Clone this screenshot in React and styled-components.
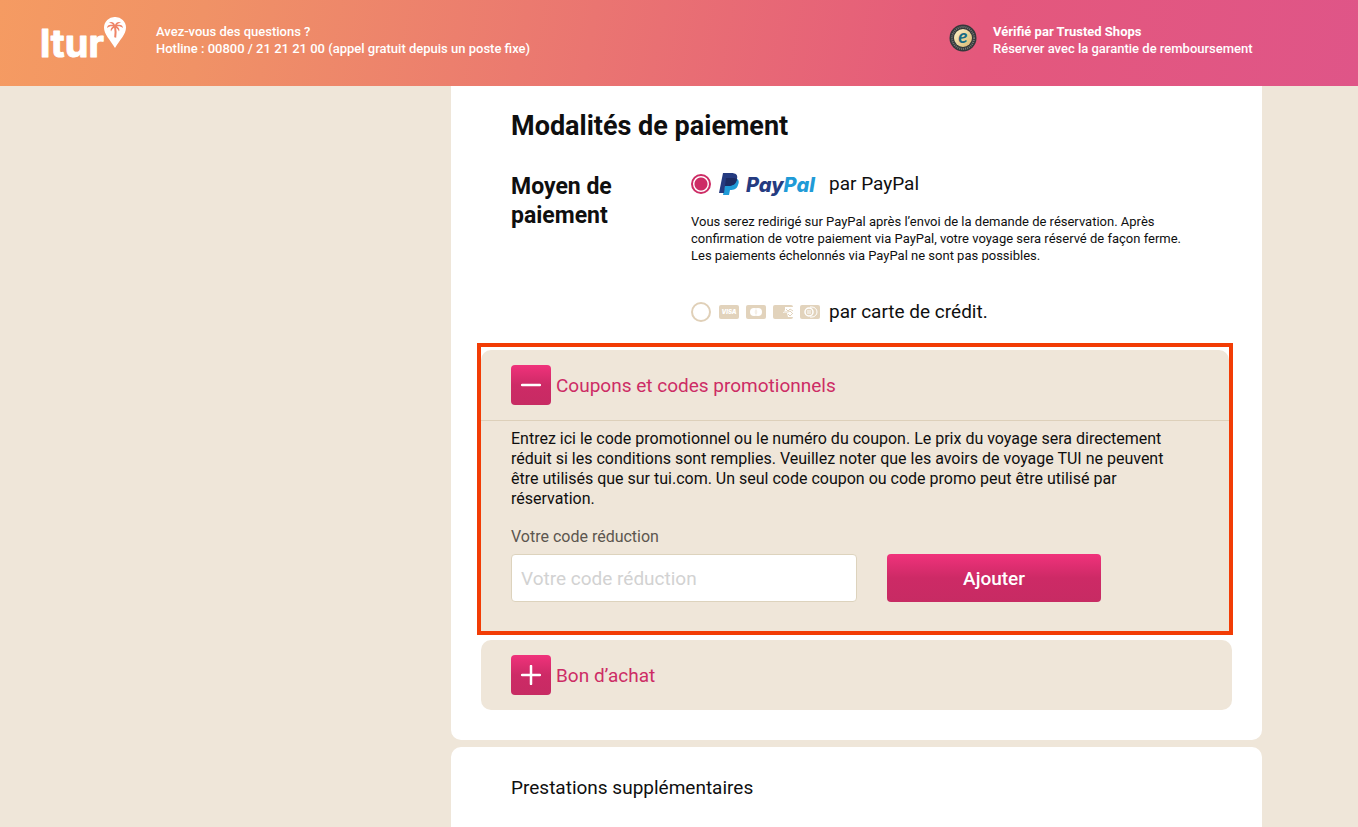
import React, { useState } from 'react'
import styled, { createGlobalStyle } from 'styled-components';

const GlobalStyle = createGlobalStyle`
  * {
    box-sizing: border-box;
  }
  body {
    margin: 0;
    background: #efe6d9;
    color: #0f0f0f;
    font-family: Roboto, "Liberation Sans", sans-serif;
    font-size: 16px;
    line-height: 20px;
  }
  h1, h2, h3, p {
    margin: 0;
  }
  button, input {
    font-family: inherit;
  }
`;

const Header = styled.header`
  display: flex;
  align-items: flex-start;
  height: 86px;
  padding: 16px 96px 0 40px;
  color: #fff;
  background: linear-gradient(100deg, #f59b62 0%, #f09266 15%, #e4587c 72%, #df5588 100%);
`;

const LogoLink = styled.a`
  display: block;
  width: 88px;
  height: 56px;
  margin-right: 28px;
  color: inherit;
`;

const HeaderText = styled.p`
  padding-top: 7px;
  font-size: 13px;
  font-weight: 500;
  line-height: 17px;

  strong {
    font-weight: 700;
  }
`;

const Trust = styled.div`
  display: grid;
  grid-template-columns: 28px 269px;
  align-items: start;
  gap: 16px;
  margin-left: auto;

  svg {
    margin-top: 8px;
  }
`;

const Layout = styled.div`
  display: grid;
  grid-template-columns: 355px 1fr;
  padding: 0 96px;
`;

const Content = styled.main`
  grid-column: 2;
  display: flex;
  flex-direction: column;
  gap: 7px;
`;

const Card = styled.section`
  padding: ${({ $first }) => ($first ? '22px 30px 30px' : '27px 30px 60px')};
  background: #fff;
  border-radius: ${({ $first }) => ($first ? '0 0 10px 10px' : '10px')};
`;

const Title = styled.h1`
  padding: 0 30px;
  font-size: 27px;
  font-weight: 700;
  line-height: 36px;
`;

const Payment = styled.div`
  display: grid;
  grid-template-columns: 150px 1fr;
  gap: 30px;
  padding: 26px 30px 17px;
`;

const Subtitle = styled.h2`
  font-size: 23px;
  font-weight: 700;
  line-height: 29px;
  padding-top: 2px;
`;

const Option = styled.label`
  display: flex;
  align-items: center;
  height: 28px;
  font-size: 19px;
`;

const Radio = styled.input`
  appearance: none;
  flex: none;
  width: 20px;
  height: 20px;
  margin: 0 8px 0 0;
  border: 2px solid #e0d0b8;
  border-radius: 50%;
  background: #fff;

  &:checked {
    border-color: #cd2c65;
    background: radial-gradient(circle, #cd2c65 6px, #fff 7px);
  }
`;

const Brands = styled.span`
  display: flex;
  gap: 7px;
  width: 110px;
`;

const Hint = styled.p`
  padding: 15px 0 34px;
  font-size: 13px;
  line-height: 17px;
`;

const Highlight = styled.div`
  margin: 0 -1px 5px -4px;
  padding-top: 3px;
  border: 4px solid #f23c05;
`;

const Panel = styled.section`
  background: #efe6d9;
  border-radius: ${({ $open }) => ($open ? '10px 10px 0 0' : '10px')};
`;

const PanelHead = styled.h3`
  height: 70px;
  padding: 15px 30px;
`;

const Toggle = styled.button`
  display: flex;
  align-items: center;
  gap: 5px;
  padding: 0;
  border: 0;
  background: none;
  color: #cd2c65;
  font-size: 19px;
  font-weight: 400;
  cursor: pointer;
`;

const ToggleIcon = styled.span`
  display: grid;
  place-items: center;
  width: 40px;
  height: 40px;
  border-radius: 4px;
  background: linear-gradient(#f0327b, #cd2a66 50%, #c72b63);
`;

const PanelBody = styled.div`
  padding: 8px 30px 29px;
  border-top: 1px solid #ddd0ba;
`;

const PanelText = styled.p`
  padding-right: 30px;
`;

const Label = styled.label`
  display: block;
  padding: 18px 0 7px;
  color: #5c564f;
`;

const CodeForm = styled.form`
  display: grid;
  grid-template-columns: 346px 214px;
  gap: 30px;
`;

const CodeInput = styled.input`
  width: 100%;
  height: 48px;
  padding: 0 9px;
  border: 1px solid #ddd3bd;
  border-radius: 4px;
  background: #fff;
  font-size: 19px;

  &::placeholder {
    color: #d2d2d2;
    opacity: 1;
  }
`;

const Submit = styled.button`
  height: 48px;
  border: 0;
  border-radius: 4px;
  color: #fff;
  font-size: 19px;
  font-weight: 500;
  background: linear-gradient(#f0327b, #cd2a66 50%, #c72b63);
  cursor: pointer;
`;

const Extras = styled.h2`
  padding: 0 30px;
  font-size: 19px;
  font-weight: 400;
  line-height: 28px;
`;

const LturLogo = () => (
  <svg width="88" height="56" viewBox="0 0 88 56" aria-label="ltur">
    <text x="0" y="41" fontFamily="Inter, sans-serif" fontWeight="700" fontSize="38" fill="#fff" stroke="#fff" strokeWidth="1" strokeLinejoin="round">ltur</text>
    <path d="M75 1a10.500 10.500 0 0 1 11 10.500c0 7-6 12-11 20.500c-5-8.500-11-13.500-11-20.500A10.500 10.500 0 0 1 75 1z" fill="#fff" />
    <path d="M75 10.500c.8 4 .8 7 .2 11" fill="none" stroke="#ee8467" strokeWidth="2" />
    <path d="M75 9c1-3 4-4 6-2c-2-.4-3 .3-4 2c3-1 6 0 6 3c-2-1.500-4-2-6-1.500c2 1 3 3 2 5c-1-2-2-3.500-4-4c-2 .5-3 2-4 4c-1-2 0-4 2-5c-2-.5-4 0-6 1.500c0-3 3-4 6-3c-1-1.700-2-2.400-4-2c2-2 5-1 6 2z" fill="#ee8467" />
  </svg>
);

const TrustBadge = () => (
  <svg width="28" height="28" viewBox="0 0 28 28" aria-hidden="true">
    <defs>
      <linearGradient id="gold" x1="0" y1="0" x2="1" y2="1">
        <stop offset="0" stopColor="#fff3c9" />
        <stop offset="1" stopColor="#d5b66f" />
      </linearGradient>
    </defs>
    <circle cx="14" cy="14" r="13.500" fill="#34383a" />
    <circle cx="14" cy="14" r="11" fill="none" stroke="#777a76" strokeWidth="2" strokeDasharray="1 1" />
    <circle cx="14" cy="14" r="9" fill="url(#gold)" />
    <text x="14" y="19" textAnchor="middle" fontFamily="Lato, sans-serif" fontSize="19" fontStyle="italic" fontWeight="700" fill="#176b85">e</text>
  </svg>
);

const PayPalLogo = () => (
  <svg width="98" height="24" viewBox="0 0 98 24" aria-label="PayPal">
    <path d="M7 6h8c4 0 6 3 4 7c-1 4-4 5-8 5l-1 5H4z" fill="#1f9bd7" />
    <path d="M4 1h8c5 0 7 2 6 6c-1 5-4 7-9 7H6l-1 7H0z" fill="#253b80" />
    <path d="M7 6h8l3 1c-1 5-4 7-9 7H6z" fill="#1c2b62" />
    <text x="27" y="20" fontFamily="Inter, sans-serif" fontSize="20" fontStyle="italic" fontWeight="800"><tspan fill="#253b80">Pay</tspan><tspan fill="#1f9bd7">Pal</tspan></text>
  </svg>
);

const CardBrand = ({ children }) => (
  <svg width="20" height="14" viewBox="0 0 20 14" aria-hidden="true">
    <rect width="20" height="14" rx="2" fill="#e2d3bc" />
    {children}
  </svg>
);

const CardBrands = () => (
  <Brands>
    <CardBrand>
      <text x="10" y="9" textAnchor="middle" fontFamily="Inter, sans-serif" fontSize="6" fontStyle="italic" fontWeight="900" fill="#fff">VISA</text>
    </CardBrand>
    <CardBrand>
      <circle cx="8" cy="7" r="4" fill="#fff" />
      <circle cx="12" cy="7" r="4" fill="#fff" />
      <path d="M10 4a4 4 0 0 1 0 6a4 4 0 0 1 0-6z" fill="#f5efe6" />
    </CardBrand>
    <CardBrand>
      <path d="M12 2h8v10h-5l-1-4h-4l2-3z" fill="#fff" />
      <path d="M13 4l2 2 2-2 3 2M11 7h4l2-1 3 3M15 9l2 2 2-2" fill="none" stroke="#e2d3bc" />
    </CardBrand>
    <CardBrand>
      <path d="M10 2h2a5 5 0 0 1 0 10h-2" fill="none" stroke="#fff" />
      <circle cx="9" cy="7" r="4" fill="#e2d3bc" stroke="#fff" strokeWidth="1.500" />
      <path d="M8 5v4M10 5v4" stroke="#fff" />
    </CardBrand>
  </Brands>
);

const Accordion = ({ title, open, onToggle, children }) => (
  <Panel $open={open}>
    <PanelHead>
      <Toggle type="button" aria-expanded={open} onClick={onToggle}>
        <ToggleIcon>
          <svg width="20" height="20" viewBox="0 0 20 20" aria-hidden="true">
            <path d={open ? 'M1 10h18' : 'M1 10h18M10 1v18'} stroke="#fff" strokeWidth="2.500" strokeLinecap="round" />
          </svg>
        </ToggleIcon>
        {title}
      </Toggle>
    </PanelHead>
    {open && children && <PanelBody>{children}</PanelBody>}
  </Panel>
);

const App = () => {
  const [method, setMethod] = useState('paypal')
  const [couponOpen, setCouponOpen] = useState(true)
  const [voucherOpen, setVoucherOpen] = useState(false)

  return (
    <>
      <GlobalStyle />
      <Header>
        <LogoLink href="#"><LturLogo /></LogoLink>
        <HeaderText>
          Avez-vous des questions ?<br />
          Hotline : 00800 / 21 21 21 00 (appel gratuit depuis un poste fixe)
        </HeaderText>
        <Trust>
          <TrustBadge />
          <HeaderText>
            <strong>Vérifié par Trusted Shops</strong><br />
            Réserver avec la garantie de remboursement
          </HeaderText>
        </Trust>
      </Header>
      <Layout>
        <Content>
          <Card $first>
            <Title>Modalités de paiement</Title>
            <Payment>
              <Subtitle>Moyen de paiement</Subtitle>
              <div>
                <Option>
                  <Radio type="radio" name="method" checked={method === 'paypal'} onChange={() => setMethod('paypal')} />
                  <Brands><PayPalLogo /></Brands>
                  par PayPal
                </Option>
                <Hint>
                  Vous serez redirigé sur PayPal après l’envoi de la demande de réservation. Après
                  confirmation de votre paiement via PayPal, votre voyage sera réservé de façon ferme.
                  Les paiements échelonnés via PayPal ne sont pas possibles.
                </Hint>
                <Option>
                  <Radio type="radio" name="method" checked={method === 'card'} onChange={() => setMethod('card')} />
                  <CardBrands />
                  par carte de crédit.
                </Option>
              </div>
            </Payment>
            <Highlight>
              <Accordion title="Coupons et codes promotionnels" open={couponOpen} onToggle={() => setCouponOpen(!couponOpen)}>
                <PanelText>
                  Entrez ici le code promotionnel ou le numéro du coupon. Le prix du voyage sera directement
                  réduit si les conditions sont remplies. Veuillez noter que les avoirs de voyage TUI ne peuvent
                  être utilisés que sur tui.com. Un seul code coupon ou code promo peut être utilisé par
                  réservation.
                </PanelText>
                <Label htmlFor="code">Votre code réduction</Label>
                <CodeForm onSubmit={(e) => e.preventDefault()}>
                  <CodeInput id="code" type="text" placeholder="Votre code réduction" />
                  <Submit type="submit">Ajouter</Submit>
                </CodeForm>
              </Accordion>
            </Highlight>
            <Accordion title="Bon d’achat" open={voucherOpen} onToggle={() => setVoucherOpen(!voucherOpen)} />
          </Card>
          <Card>
            <Extras>Prestations supplémentaires</Extras>
          </Card>
        </Content>
      </Layout>
    </>
  )
}

export default App
